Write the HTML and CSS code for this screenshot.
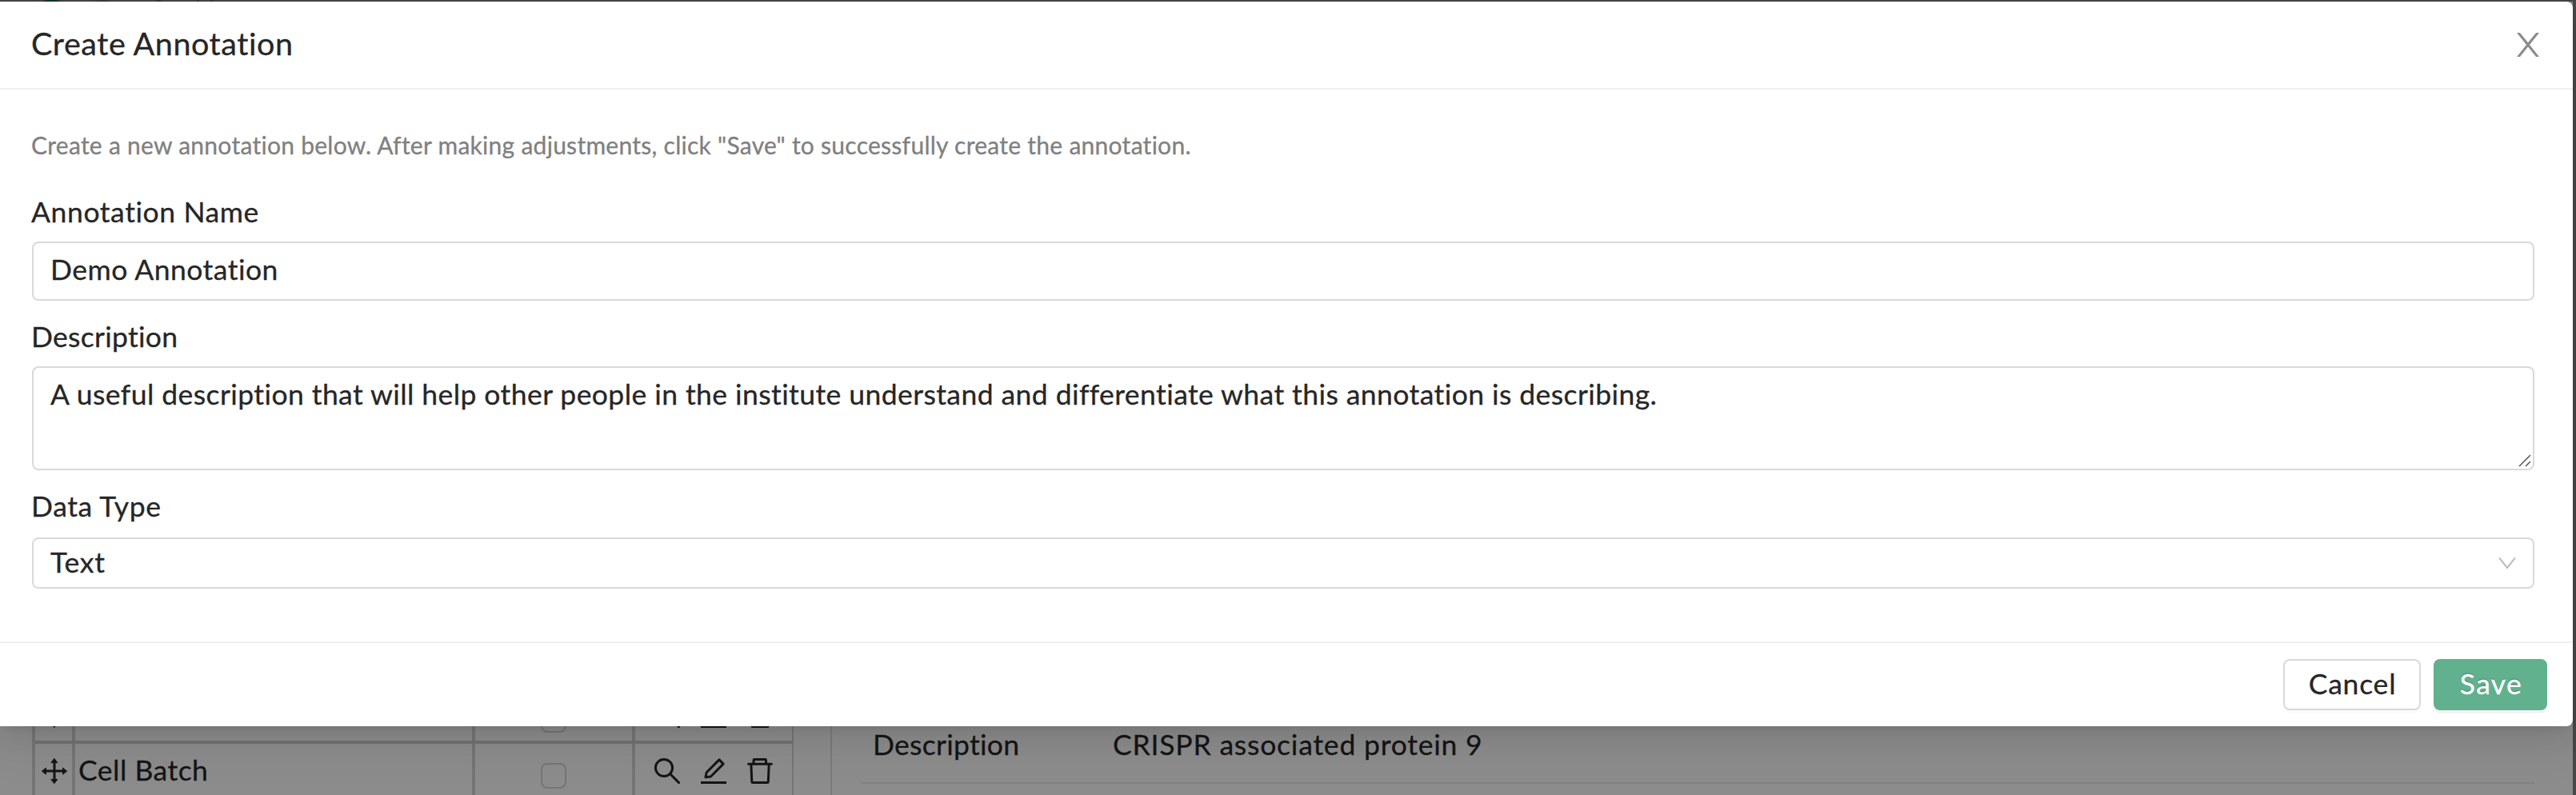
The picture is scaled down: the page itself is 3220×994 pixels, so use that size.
FILE: index.html
```html
<!DOCTYPE html>
<html lang="en">
<head>
<meta charset="utf-8">
<title>Create Annotation</title>
<link rel="stylesheet" href="styles.css">
</head>
<body>
<svg class="defs" aria-hidden="true">
  <symbol id="search" viewBox="0 0 32 32"><circle cx="12" cy="12" r="10.6"/><path d="M19.8 19.8 30.6 30.6"/></symbol>
  <symbol id="edit" viewBox="0 0 32 32"><path d="M23 1.9 28.1 7.1 12.4 23 6 23.8 7.2 17.7Z"/><path d="M0 30.5H32"/></symbol>
  <symbol id="trash" viewBox="0 0 32 32"><path d="M1.6 7.2H30.4M8 7V2.4Q8 1.5 8.9 1.5H22.6Q23.5 1.5 23.5 2.4V7M4.9 8 5.8 29.5Q5.9 30.5 6.9 30.5H25.2Q26.2 30.5 26.3 29.5L27.2 8"/></symbol>
  <symbol id="move" viewBox="0 0 32 32"><path d="M16 4V28M4 16H28"/><path class="solid" d="M16 .6 19.8 5.6H12.2ZM16 31.4 19.8 26.4H12.2ZM.6 16 5.4 12.2V19.8ZM31.4 16 26.6 12.2V19.8Z"/></symbol>
</svg>

<div class="page">
  <header class="topbar">
    <svg viewBox="0 0 300 2" width="300" height="2">
      <path d="M52 2Q56 0 61 0H68Q73 0 77 2Z" fill="#0f3827"/>
      <path d="M116 2Q121 .3 128 .3T140 2M194 2 197 0H200L203 2M246 0H249V2H246ZM263 0H266V2H263Z" fill="#383636"/>
    </svg>
  </header>
  <main class="backdrop">
    <section class="table">
      <div class="row">
        <div class="cell"><svg class="icon move"><use href="#move"/></svg></div>
        <div class="cell"></div>
        <div class="cell"><span class="check"></span></div>
        <div class="cell tools"><svg class="icon"><use href="#search"/></svg><svg class="icon"><use href="#edit"/></svg><svg class="icon"><use href="#trash"/></svg></div>
      </div>
      <div class="row">
        <div class="cell"><svg class="icon move"><use href="#move"/></svg></div>
        <div class="cell"><span class="name">Cell Batch</span></div>
        <div class="cell"><span class="check"></span></div>
        <div class="cell tools"><svg class="icon"><use href="#search"/></svg><svg class="icon"><use href="#edit"/></svg><svg class="icon"><use href="#trash"/></svg></div>
      </div>
    </section>
    <section class="details">
      <dl class="detail">
        <dt>Description</dt>
        <dd>CRISPR associated protein 9</dd>
      </dl>
    </section>
  </main>
</div>

<div class="modal" role="dialog">
  <div class="modal-header">
    <h1>Create Annotation</h1>
    <svg class="close" viewBox="0 0 28 30" width="28" height="30"><path d="M0 0H4L14 12.2 24 0H28L16 14.9 28 30H24L14 17.6 4 30H0L12 14.9Z"/></svg>
  </div>
  <div class="modal-body">
    <p class="note">Create a new annotation below. After making adjustments, click "Save" to successfully create the annotation.</p>
    <div class="field">
      <label class="wide">Annotation Name</label>
      <div class="input">Demo Annotation</div>
    </div>
    <div class="field">
      <label>Description</label>
      <div class="textarea">A useful description that will help other people in the institute understand and differentiate what this annotation is describing.
        <svg class="grip" viewBox="0 0 16 16" width="16" height="16"><path d="M1 15 15 1M9 15 15 9"/></svg>
      </div>
    </div>
    <div class="field">
      <label class="wide">Data Type</label>
      <div class="select"><span>Text</span><svg viewBox="0 0 22 14" width="22" height="14"><path d="M1 .3 11 13 21 .3"/></svg></div>
    </div>
  </div>
  <div class="modal-footer">
    <button class="btn">Cancel</button>
    <button class="btn primary">Save</button>
  </div>
</div>
</body>
</html>
```
FILE: styles.css
```css
* { box-sizing: border-box; }

body {
  margin: 0;
  width: 3220px;
  height: 994px;
  overflow: hidden;
  position: relative;
  font: 35.5px/58px Lato, "Noto Sans", sans-serif;
  letter-spacing: 0.43px;
  -webkit-text-stroke: 0.3px;
  color: #262626;
  background: #484848;
}

.defs { position: absolute; width: 0; height: 0; }

/* Dimmed page under the dialog */
.page { height: 994px; color: #151515; overflow: hidden; }
.topbar { height: 2px; background: #484545; }
.topbar svg { display: block; }
.backdrop {
  width: 3216px;
  height: 992px;
  padding: 862px 48px 0 40px;
  display: flex;
  background: #8c8c8c;
}

.table {
  width: 952px;
  height: 130px;
  overflow: hidden;
  border-left: 4px solid #757575;
  border-right: 2px solid #757575;
}
.row {
  display: grid;
  grid-template-columns: 50px 500px 200px 196px;
  height: 70px;
  border-bottom: 4px solid #727272;
}
.row:first-child { height: 66px; }
.row:first-child .cell { padding-top: 14px; }
.cell {
  display: flex;
  align-items: flex-start;
  justify-content: center;
  border-right: 4px solid #757575;
  padding-top: 18px;
}
.cell:last-child { border-right: 0; }
.cell:nth-child(2) { justify-content: flex-start; padding-left: 4px; }
.tools { justify-content: flex-start; padding-left: 24px; gap: 26px; }
.name { margin-top: -14px; letter-spacing: 0.5px; }
.icon {
  width: 32px;
  height: 32px;
  fill: none;
  stroke: #151515;
  stroke-width: 3;
  stroke-linecap: round;
  stroke-linejoin: round;
}
.move { margin-left: 2px; }
.solid { fill: #151515; stroke-width: 1; }
.check {
  width: 32px;
  height: 32px;
  margin: 6px 0 0 0;
  border: 2px solid #757575;
  border-radius: 8px;
}

.details {
  flex: 1;
  height: 130px;
  margin-left: 46px;
  padding-left: 36px;
  border-left: 2px solid #7a7a7a;
}
.detail {
  display: flex;
  height: 116px;
  margin: 0;
  padding: 38px 0 0 15px;
  border-bottom: 2px solid #828282;
}
.detail dt { width: 300px; letter-spacing: 0.3px; }
.detail dd { margin: 0; letter-spacing: 0.8px; }

/* Dialog */
.modal {
  position: absolute;
  left: 0;
  top: 2px;
  width: 3216px;
  height: 906px;
  display: flex;
  flex-direction: column;
  background: #fff;
  border-radius: 0 8px 8px 0;
  box-shadow: 0 6px 12px -8px rgba(0, 0, 0, 0.12), 0 12px 32px rgba(0, 0, 0, 0.08), 0 18px 56px 16px rgba(0, 0, 0, 0.05);
}
.modal-header {
  display: flex;
  justify-content: space-between;
  height: 110px;
  padding: 27px 42px 0 39px;
  border-bottom: 2px solid #f0f0f0;
}
.modal-header h1 {
  margin: 0;
  font-size: 39.5px;
  font-weight: 400;
  line-height: 49px;
  letter-spacing: 0.55px;
}
.close { margin-top: 12px; fill: #8c8c8c; }

.modal-body { flex: 1; padding: 48px 48px 0 40px; }
.note {
  margin: 0 0 34px -1px;
  font-size: 30px;
  line-height: 42px;
  letter-spacing: 0.27px;
  color: #808080;
}
.field { margin-bottom: 16px; }
.field label { display: block; height: 66px; margin-left: -1px; letter-spacing: 0.3px; }
.field:last-child label { height: 68px; }
.field label.wide { letter-spacing: 0.6px; }
.input, .textarea, .select {
  border: 2px solid #d9d9d9;
  border-radius: 8px;
  padding: 4px 21px;
}
.input { height: 74px; letter-spacing: 0.5px; }
.textarea { height: 130px; position: relative; }
.grip {
  position: absolute;
  right: 2px;
  bottom: 2px;
  fill: none;
  stroke: #555;
  stroke-width: 1.5;
}
.select {
  height: 64px;
  padding-top: 0;
  display: flex;
  justify-content: space-between;
  letter-spacing: 0.8px;
}
.select svg { margin-top: 23px; fill: none; stroke: #bfbfbf; stroke-width: 2.2; }

.modal-footer {
  display: flex;
  justify-content: flex-end;
  gap: 16px;
  height: 106px;
  padding: 20px 32px 0;
  border-top: 2px solid #f0f0f0;
}
.btn {
  width: 172px;
  height: 64px;
  padding: 0 0 2px 1px;
  border: 2px solid #d9d9d9;
  border-radius: 8px;
  background: #fff;
  box-shadow: 0 4px 0 rgba(0, 0, 0, 0.016);
  font: inherit;
  letter-spacing: 0.8px;
  color: #262626;
}
.btn.primary {
  width: 142px;
  padding-left: 2px;
  border-color: #61b08e;
  background: #61b08e;
  box-shadow: 0 4px 0 rgba(0, 0, 0, 0.043);
  letter-spacing: 1.4px;
  color: #fff;
  text-shadow: 0 -2px 0 rgba(0, 0, 0, 0.12);
}
```
